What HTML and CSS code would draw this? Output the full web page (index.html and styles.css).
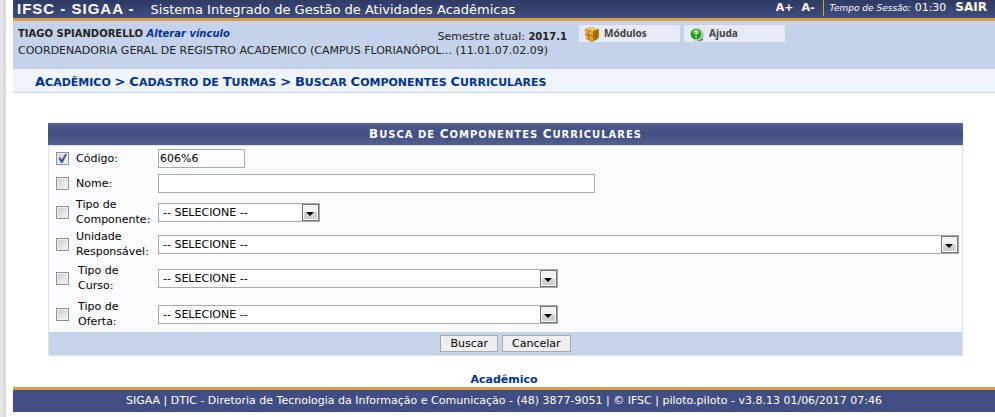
FILE: index.html
```html
<!DOCTYPE html>
<html lang="pt-BR">
<head>
<meta charset="utf-8">
<title>SIGAA - Sistema Integrado de Gestão de Atividades Acadêmicas</title>
<link rel="stylesheet" href="styles.css">
</head>
<body>
<div class="page">
  <header class="topbar">
    <h1 class="brand">IFSC - SIGAA -</h1>
    <span class="system">Sistema Integrado de Gestão de Atividades Acadêmicas</span>
    <div class="session">
      <button type="button" class="size">A+</button>
      <button type="button" class="size">A-</button>
      <span class="time"><em>Tempo de Sessão:</em> 01:30</span>
      <a class="exit" href="#">SAIR</a>
    </div>
  </header>
  <section class="user">
    <div class="info">
      <div class="person">
        <span><strong>TIAGO SPIANDORELLO</strong> <a class="change" href="#">Alterar vínculo</a></span>
        <span class="term">Semestre atual: <strong>2017.1</strong></span>
      </div>
      <div class="unit">COORDENADORIA GERAL DE REGISTRO ACADEMICO (CAMPUS FLORIANÓPOL... (11.01.07.02.09)</div>
    </div>
    <nav class="menu">
      <a href="#"><svg width="16" height="16" viewBox="0 0 16 16" aria-hidden="true">
        <path d="M1 3 7 1l8 2v9l-7 4-6-3z" fill="#b87b10"/>
        <path d="M1 3 7 1l8 2-6 2z" fill="#f4d15d"/>
        <path d="M1 3l8 2v10.500L2 13z" fill="#e2a52a"/>
        <path d="M9 5l6-2-1 9-5 3.500z" fill="#b07410"/>
        <path d="M5 4v10M1.500 8 9 10l5.500-2.500M12 4v10" fill="none" stroke="#8c5a0c" stroke-width=".7"/>
        <path d="M2.500 5.500v1M6.500 6.500v1.500" stroke="#ffe696"/>
      </svg>Módulos</a>
      <a href="#"><svg width="16" height="16" viewBox="0 0 16 16" aria-hidden="true">
        <path d="M10 13l4-1v2l-4 2z" fill="#777"/>
        <circle cx="8" cy="8.500" r="6.500" fill="#8d9691"/>
        <circle cx="7" cy="8" r="6.500" fill="#eef5ee"/>
        <circle cx="7" cy="8" r="5.500" fill="#1c9e16"/>
        <path d="M3 7a4 4 0 0 1 8 0q-4 2-8 0" fill="#48c33b"/>
        <path d="M5.500 6.500q0-1.500 1.500-1.500t1.500 1.300Q8.500 7.300 7 8v1M7 10v1.500" fill="none" stroke="#fff" stroke-width="1.400"/>
      </svg>Ajuda</a>
    </nav>
  </section>
  <nav class="crumbs caps"><span>Acadêmico</span> <b>&gt;</b> <span>Cadastro</span> de <span>Turmas</span> <b>&gt;</b> <span>Buscar</span> <span>Componentes</span> <span>Curriculares</span></nav>

  <form class="search">
    <h2 class="caps"><span>Busca</span> de <span>Componentes</span> <span>Curriculares</span></h2>
    <div class="fields">
      <div class="row">
        <input type="checkbox" id="c1" aria-label="Código" checked>
        <label for="codigo">Código:</label>
        <input type="text" id="codigo" class="short" value="606%6">
      </div>
      <div class="row">
        <input type="checkbox" id="c2" aria-label="Nome">
        <label for="nome">Nome:</label>
        <input type="text" id="nome" class="long">
      </div>
      <div class="row tall">
        <input type="checkbox" id="c3" aria-label="Tipo de Componente">
        <label for="componente">Tipo de Componente:</label>
        <span class="select narrow"><select id="componente"><option>-- SELECIONE --</option></select></span>
      </div>
      <div class="row tall">
        <input type="checkbox" id="c4" aria-label="Unidade Responsável">
        <label for="unidade">Unidade Responsável:</label>
        <span class="select"><select id="unidade"><option>-- SELECIONE --</option></select></span>
      </div>
      <div class="row taller">
        <input type="checkbox" id="c5" aria-label="Tipo de Curso">
        <label for="curso">Tipo de<br>Curso:</label>
        <span class="select medium"><select id="curso"><option>-- SELECIONE --</option></select></span>
      </div>
      <div class="row taller">
        <input type="checkbox" id="c6" aria-label="Tipo de Oferta">
        <label for="oferta">Tipo de<br>Oferta:</label>
        <span class="select medium"><select id="oferta"><option>-- SELECIONE --</option></select></span>
      </div>
    </div>
    <div class="actions">
      <button type="submit">Buscar</button>
      <button type="button">Cancelar</button>
    </div>
  </form>
  <a class="back" href="#">Acadêmico</a>
  <footer>SIGAA | DTIC - Diretoria de Tecnologia da Informação e Comunicação - (48) 3877-9051 | © IFSC | piloto.piloto - v3.8.13 01/06/2017 07:46</footer>
</div>
</body>
</html>
```
FILE: styles.css
```css
*, *::before, *::after { box-sizing: border-box; }
body {
  margin: 0;
  padding-left: 13px;
  min-height: 100vh;
  background: linear-gradient(90deg, #e9e9e9, #dedede 4px, #c6c6c6 5px, #fff 6px);
  color: #222;
  font: 11px/15px "DejaVu Sans", Verdana, sans-serif;
}
a { color: #003390; text-decoration: none; }

/* Small capitals: full-size initials, smaller capitals after them */
.caps { text-transform: uppercase; font-weight: bold; }
.caps span { display: inline-block; }

.topbar {
  display: flex;
  align-items: center;
  height: 21px;
  padding: 0 8px 3px 4px;
  border-bottom: 3px solid #de9c42;
  background: linear-gradient(#2f3b65, #404c7c);
  color: #fff;
}
.brand {
  margin: 0 16px 0 0;
  font: bold 15px/16px "Liberation Sans", Arial, sans-serif;
  letter-spacing: 1px;
}
.brand, .system { padding-top: 3px; }
.system { font-size: 13px; }
.session { display: flex; align-items: center; margin-left: auto; }
.size {
  margin-right: 8px;
  padding: 0;
  border: 0;
  background: none;
  color: #fff;
  font: bold 11px/14px "DejaVu Sans", Verdana, sans-serif;
}
.time { padding-left: 6px; border-left: 1px solid #de9c42; }
.time em { font-size: 9px; }
.exit { margin-left: 9px; color: #fffbe0; font-size: 12px; font-weight: bold; }

.user { display: flex; height: 48px; background: #c4d2eb; }
.info { flex: 0 0 554px; padding: 5px 0 0 5px; }
.person { display: flex; justify-content: space-between; }
.person strong, .change { font-size: 10px; }
.change { font-weight: bold; font-style: italic; }
.term { padding-top: 3px; }
.unit { margin-top: -1px; white-space: nowrap; }
.menu { display: flex; gap: 4px; padding: 4px 0 0 12px; }
.menu a {
  display: flex;
  align-items: center;
  gap: 4px;
  width: 101px;
  height: 17px;
  padding-left: 5px;
  background: #e4eaf6;
  color: #404040;
  font: bold 10px/15px "Noto Sans", "Open Sans", sans-serif;
}

.crumbs {
  height: 24px;
  padding: 4px 22px;
  border-bottom: 1px solid #c4d2eb;
  background: #eff3fa;
  color: #003390;
  line-height: 18px;
}
.crumbs b, .crumbs span::first-letter { font-size: 13px; }

.search { margin: 30px 32px 0 35px; color: #000; }
.search h2 {
  height: 22px;
  margin: 0;
  background: linear-gradient(#53618f, #404e82 50%, #53618f);
  color: #fff;
  font-size: 10px;
  letter-spacing: 1px;
  line-height: 22px;
  text-align: center;
}
.search h2 span::first-letter { font-size: 12px; }
.fields { border: 1px solid #dee2e8; border-bottom: 0; background: #fafbfd; }
.row {
  display: grid;
  grid-template-columns: 20px 82px 1fr;
  align-items: center;
  min-height: 25px;
  padding: 0 3px 0 7px;
}
.tall { min-height: 32px; }
.taller { min-height: 36px; }
.taller label { padding-left: 2px; }
input[type="checkbox"] {
  appearance: none;
  width: 13px;
  height: 13px;
  margin: 0;
  border: 1px solid #8e8f8f;
  background: linear-gradient(135deg, #c9cdd2, #f6f6f6);
  box-shadow: inset 0 0 0 1px #f4f4f4;
}
input[type="checkbox"]:checked::before {
  content: "";
  display: block;
  width: 9px;
  height: 9px;
  margin: 1px;
  background: #3b5199;
  clip-path: polygon(5% 45%, 25% 40%, 42% 65%, 80% 0, 100% 0, 50% 100%, 35% 100%);
}
input[type="text"], select {
  height: 19px;
  padding: 0 1px;
  border: 1px solid #aaa;
  border-radius: 0;
  background: #fff;
  color: #000;
  font: 11px/15px "DejaVu Sans", Verdana, sans-serif;
}
.short { width: 87px; }
.long { width: 437px; }
.select { position: relative; display: flex; }
.narrow { width: 162px; }
.medium { width: 400px; }
select { appearance: none; width: 100%; margin: 0; padding-left: 4px; }
.select::before {
  content: "";
  position: absolute;
  top: 1px;
  right: 1px;
  width: 17px;
  height: 17px;
  border: 1px solid #707070;
  background: linear-gradient(#f2f2f2 50%, #d4d4d4 50%, #ccc);
  box-shadow: inset 0 0 0 1px #fbfbfb;
  pointer-events: none;
}
.select::after {
  content: "";
  position: absolute;
  top: 9px;
  right: 6px;
  border: 4px solid transparent;
  border-top-color: #000;
  border-bottom: 0;
  pointer-events: none;
}
.actions {
  display: flex;
  justify-content: center;
  gap: 4px;
  padding: 3px 0;
  border: 1px solid #dee2e8;
  border-top: 0;
  background: #c8d4ec;
}
.actions button {
  height: 17px;
  padding: 0 9px;
  border: 1px solid #aaa;
  background: #efefef;
  color: #000;
  font: 11px/13px "DejaVu Sans", Verdana, sans-serif;
}
.back {
  display: block;
  margin-top: 16px;
  font-weight: bold;
  text-align: center;
}
footer {
  border-top: 3px solid #de9c42;
  background: #404e82;
  color: #fff;
  line-height: 22px;
  text-align: center;
}
```
